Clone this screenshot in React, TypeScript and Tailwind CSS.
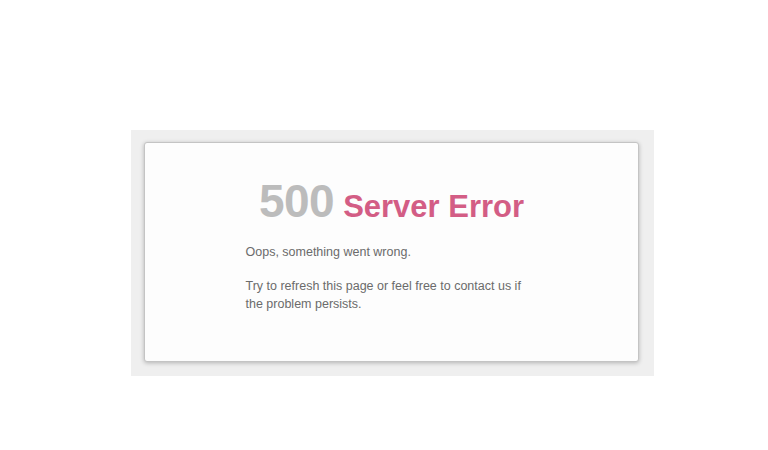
export default function App() {
  return (
    <main className="min-h-[450px] w-[768px] bg-white pt-[130px] pl-[131px] font-['Liberation_Sans',Arial,sans-serif]">
      <div className="w-[523px] h-[246px] bg-[#efefef] pt-[12px] pl-[13px]">
        <section className="w-[495px] h-[220px] bg-[#fdfdfd] border border-[#c4c4c4] rounded-[3px] shadow-[0_1px_4px_rgba(0,0,0,0.25)] pt-[35px]">
          <h1 className="flex items-baseline justify-center gap-[9px] leading-none font-bold">
            <span className="text-[46px] text-[#bcbcbc] tracking-[-0.5px]">500</span>
            <span className="text-[31px] text-[#d35d85]">Server Error</span>
          </h1>
          <div className="mx-auto w-[292px] mt-[19px] text-[12.5px] leading-[18px] text-[#6b6b6b]">
            <p>Oops, something went wrong.</p>
            <p className="mt-[16px]">Try to refresh this page or feel free to contact us if the problem persists.</p>
          </div>
        </section>
      </div>
    </main>
  )
}
